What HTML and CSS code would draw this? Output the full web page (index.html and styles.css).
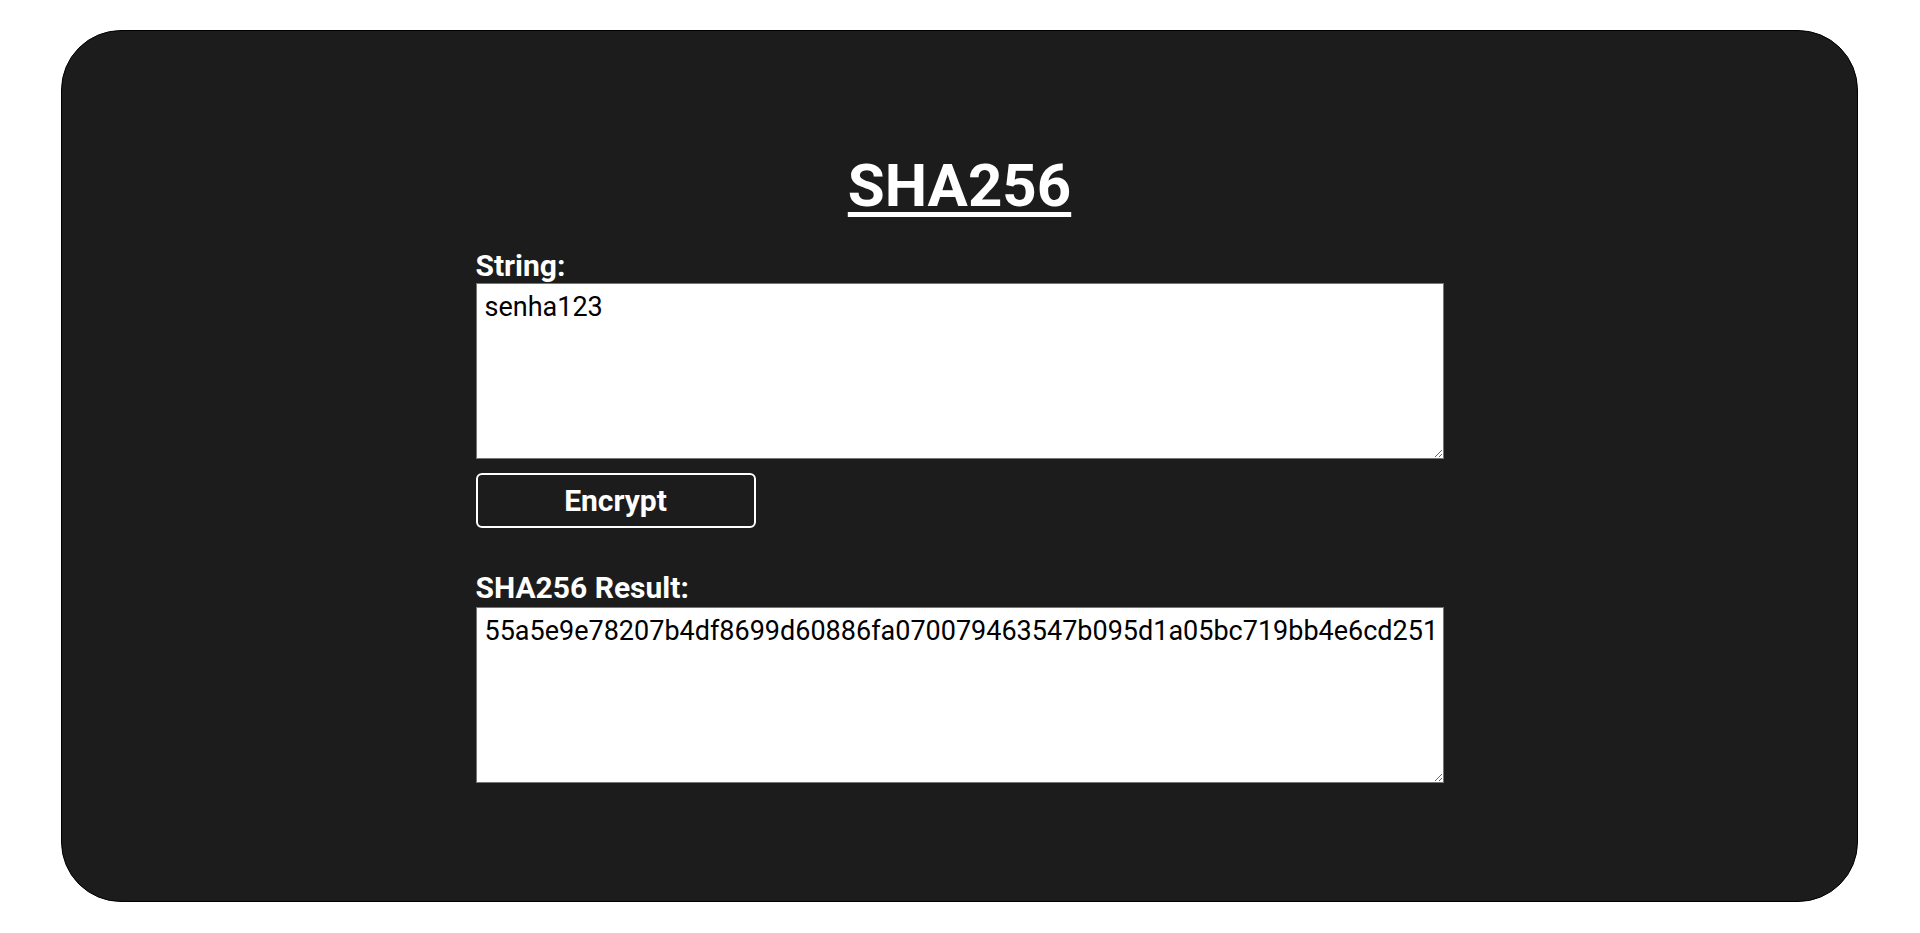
FILE: index.html
```html
<!DOCTYPE html>
<html lang="en">
<head>
<meta charset="utf-8">
<title>SHA256</title>
<link rel="stylesheet" href="styles.css">
</head>
<body>
<main class="card">
  <div class="form">
    <h1 class="title">SHA256</h1>
    <label class="label" for="input">String:</label>
    <textarea id="input" class="field">senha123</textarea>
    <button class="btn" type="button">Encrypt</button>
    <label class="label label-result" for="output">SHA256 Result:</label>
    <textarea id="output" class="field">55a5e9e78207b4df8699d60886fa070079463547b095d1a05bc719bb4e6cd251</textarea>
  </div>
</main>
</body>
</html>
```
FILE: styles.css
```css
html, body {
  margin: 0;
  padding: 0;
  background: #ffffff;
  font-family: Roboto, "Liberation Sans", sans-serif;
}

body {
  padding: 30px 62px 31px 61px;
  box-sizing: border-box;
  height: 933px;
}

.card {
  height: 872px;
  box-sizing: border-box;
  background: #1c1c1c;
  border: 1px solid #000;
  border-radius: 60px;
  display: flex;
  flex-direction: column;
  align-items: center;
  justify-content: center;
}

.form {
  width: 968px;
  display: flex;
  flex-direction: column;
  align-items: flex-start;
}

.title {
  align-self: center;
  margin: 0 0 27px;
  font-size: 60px;
  font-weight: 700;
  line-height: normal;
  color: #fff;
  text-decoration: underline;
  text-decoration-thickness: 5px;
  text-underline-offset: 6px;
}

.label {
  display: block;
  color: #fff;
  font-size: 30px;
  font-weight: 700;
  line-height: normal;
}

.label-result {
  margin-top: 42px;
  margin-bottom: 2px;
}

.field {
  box-sizing: border-box;
  width: 968px;
  height: 176px;
  padding: 7px 1px 7px 8px;
  border: 1px solid #767676;
  background: #fff;
  color: #000;
  font-family: Roboto, "Liberation Sans", sans-serif;
  font-size: 27px;
  line-height: normal;
  margin: 0;
}

.btn {
  margin-top: 14px;
  width: 280px;
  height: 55px;
  box-sizing: border-box;
  background: #1c1c1c;
  color: #fff;
  border: 2px solid #fff;
  border-radius: 6px;
  font-family: Roboto, "Liberation Sans", sans-serif;
  font-size: 30px;
  font-weight: 700;
  padding: 0;
}
```
